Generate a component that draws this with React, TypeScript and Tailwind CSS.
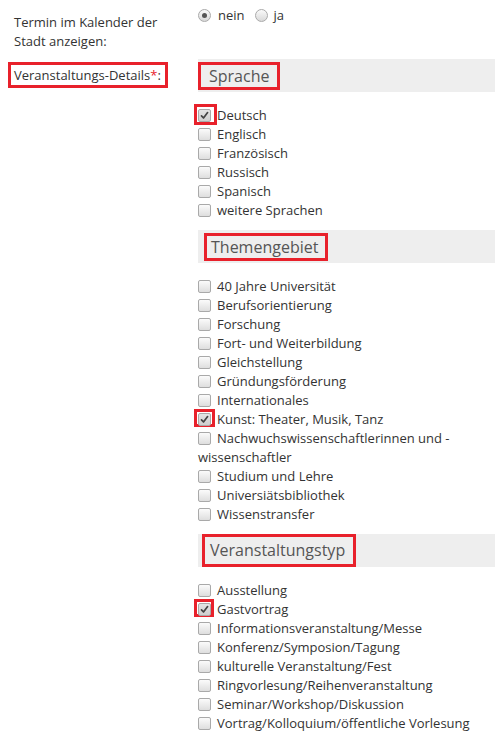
import React from "react";

type Item = { label: string; checked?: boolean; mark?: string };

const sprachen: Item[] = [
  { label: "Deutsch", checked: true, mark: "ml-[-4px] mt-[-2px] w-[23px] h-[21px]" },
  { label: "Englisch" },
  { label: "Französisch" },
  { label: "Russisch" },
  { label: "Spanisch" },
  { label: "weitere Sprachen" },
];

const themen: Item[] = [
  { label: "40 Jahre Universität" },
  { label: "Berufsorientierung" },
  { label: "Forschung" },
  { label: "Fort- und Weiterbildung" },
  { label: "Gleichstellung" },
  { label: "Gründungsförderung" },
  { label: "Internationales" },
  { label: "Kunst: Theater, Musik, Tanz", checked: true, mark: "ml-[-4px] mt-[-1px] w-[21px] h-[18px]" },
  { label: "Nachwuchswissenschaftlerinnen und - wissenschaftler" },
  { label: "Studium und Lehre" },
  { label: "Universiätsbibliothek" },
  { label: "Wissenstransfer" },
];

const typen: Item[] = [
  { label: "Ausstellung" },
  { label: "Gastvortrag", checked: true, mark: "ml-[-4px] mt-[-1px] w-[20px] h-[18px]" },
  { label: "Informationsveranstaltung/Messe" },
  { label: "Konferenz/Symposion/Tagung" },
  { label: "kulturelle Veranstaltung/Fest" },
  { label: "Ringvorlesung/Reihenveranstaltung" },
  { label: "Seminar/Workshop/Diskussion" },
  { label: "Vortrag/Kolloquium/öffentliche Vorlesung" },
];

function Box({ checked }: { checked?: boolean }) {
  return (
    <span
      className={`relative inline-block w-[13px] h-[13px] rounded-[2px] border border-[#a9a9a9] align-[-2px] mr-[6px] ${
        checked ? "bg-gradient-to-b from-[#e4e4e4] to-[#cfcfcf]" : "bg-gradient-to-b from-[#fbfbfb] to-[#dedede]"
      }`}
    >
      {checked && (
        <svg viewBox="0 0 11 11" className="absolute left-0 top-0 w-[11px] h-[11px]">
          <path d="M2.5 5.9 L4.5 8 L8.6 2.6" fill="none" stroke="#444444" strokeWidth="1.7" strokeLinecap="round" strokeLinejoin="round" />
        </svg>
      )}
    </span>
  );
}

function Row({ item }: { item: Item }) {
  return (
    <div className="relative">
      {item.mark && (
        <span className={`absolute left-0 top-0 border-[3px] border-[#e8212b] ${item.mark}`} />
      )}
      <Box checked={item.checked} />
      {item.label}
    </div>
  );
}

function Section({ title, items, box, last }: { title: string; items: Item[]; box: string; last?: boolean }) {
  return (
    <div className={last ? "" : "mb-[10px]"}>
      <div className="h-[33px] bg-[#eeeeee] flex items-center">
        <span className={`border-[3px] border-[#e8212b] text-[16px] text-[#555555] ${box}`}>{title}</span>
      </div>
      <div className="mt-[14px] leading-[19px]">
        {items.map((it) => (
          <Row key={it.label} item={it} />
        ))}
      </div>
    </div>
  );
}

function Radio({ checked }: { checked?: boolean }) {
  return (
    <span className="relative inline-flex items-center justify-center w-[13px] h-[13px] rounded-full border border-[#aaaaaa] bg-gradient-to-b from-[#fafafa] to-[#d9d9d9]">
      {checked && <span className="w-[5px] h-[5px] rounded-full bg-[#555555]" />}
    </span>
  );
}

export default function App() {
  return (
    <div
      className="w-[495px] min-h-[746px] bg-white text-[13px] text-[#333333]"
      style={{ fontFamily: '"Open Sans", "Liberation Sans", sans-serif' }}
    >
      <div className="flex items-start">
        <div className="w-[198px] shrink-0 pl-[14px] pt-[13px] pr-[30px] leading-[19px]">
          Termin im Kalender der Stadt anzeigen:
        </div>
        <div className="mt-[6px] h-[19px] flex items-center leading-[19px]">
          <Radio checked />
          <span className="ml-[7px] mr-[10px]">nein</span>
          <Radio />
          <span className="ml-[6px]">ja</span>
        </div>
      </div>

      <div className="flex items-start mt-[8px]">
        <div className="w-[198px] shrink-0 pl-[8px] pt-[3px]">
          <span className="inline-block whitespace-nowrap border-[3px] border-[#e8212b] pl-[3px] pr-[4px] leading-[20px]">
            Veranstaltungs-Details<span className="text-[#e8212b]">*</span>:
          </span>
        </div>
        <div className="flex-1 min-w-0">
          <Section title="Sprache" items={sprachen} box="pl-[8px] pr-[8px] h-[28px] leading-[22px]" />
          <Section title="Themengebiet" items={themen} box="pl-[4px] pr-[7px] ml-[6px] h-[28px] leading-[22px]" />
          <Section title="Veranstaltungstyp" items={typen} box="pl-[5px] pr-[8px] ml-[4px] h-[33px] leading-[27px]" last />
        </div>
      </div>
    </div>
  );
}
